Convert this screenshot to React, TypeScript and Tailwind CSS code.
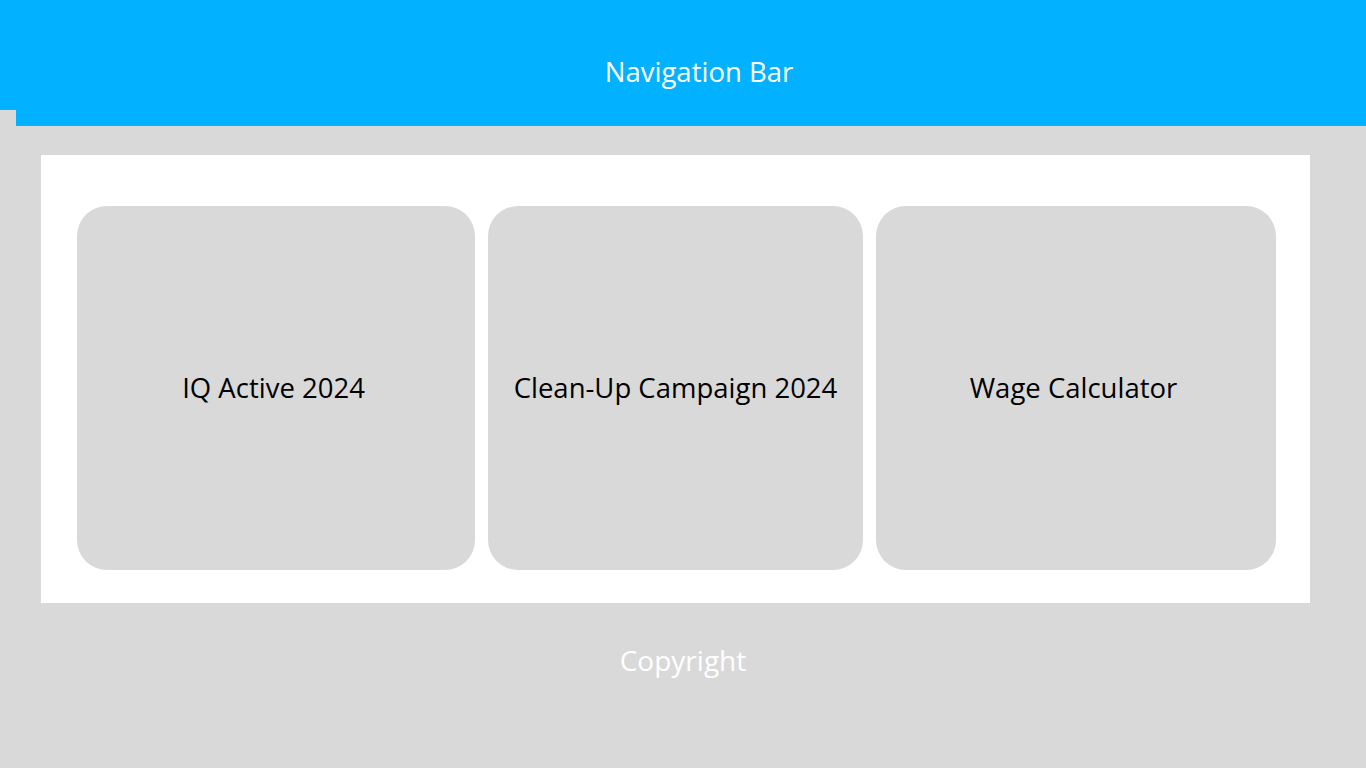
import React from "react";

const cards = [
  { title: "IQ Active 2024", w: "w-[398px]", text: "pr-[5px]" },
  { title: "Clean-Up Campaign 2024", w: "w-[375px]", text: "" },
  { title: "Wage Calculator", w: "w-[400px]", text: "pr-[5px]" },
];

const App = () => {
  return (
    <div className="w-[1366px] h-[768px] bg-[#d9d9d9] font-['Open_Sans',sans-serif] overflow-hidden">
      {/* Nav */}
      <div className="h-[110px] bg-[#02b1ff] flex items-end justify-center pl-[32px] pb-[25px]">
        <span className="text-white text-[27.5px] leading-none">Navigation Bar</span>
      </div>
      <div className="h-[16px] ml-[16px] bg-[#02b1ff]" />

      {/* Panel */}
      <div className="mt-[29px] ml-[41px] w-[1269px] h-[448px] bg-white pt-[51px] pl-[36px] flex gap-[13px]">
        {cards.map((c) => (
          <div
            key={c.title}
            className={`${c.w} h-[364px] rounded-[30px] bg-[#d9d9d9] flex items-center justify-center`}
          >
            <span className={`text-[27.5px] text-black ${c.text}`}>{c.title}</span>
          </div>
        ))}
      </div>

      {/* Footer */}
      <div className="mt-[36px] text-center text-white text-[28px]">Copyright</div>
    </div>
  );
};

export default App;
